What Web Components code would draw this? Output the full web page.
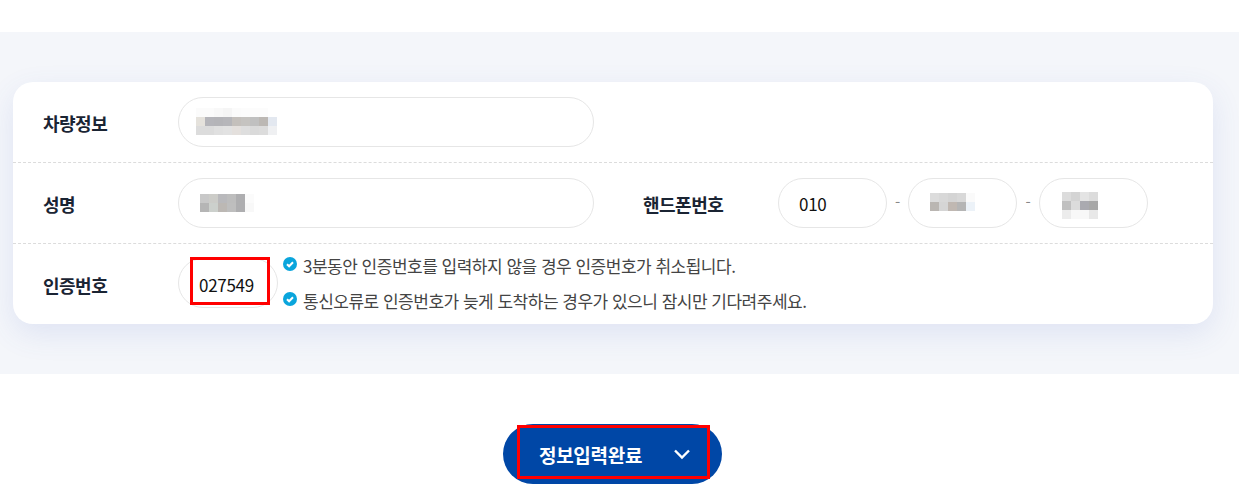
<!DOCTYPE html>
<html lang="ko">
<head>
<meta charset="utf-8">
<title>정보입력</title>
<style>
  body { margin: 0; background: #fff; font-family: "Noto Sans CJK KR", "Noto Sans", sans-serif; color: #111; }
</style>
</head>
<body>
<info-band>
  <info-card>
    <form-row label="차량정보">
      <pill-field w="416"><mosaic-blur cell="9" cols="9" offset="17" dy="-1" colors="fbfbfb fbfbfb f8f8f8 f5f5f5 fbfbfb fcfcfc fcfcfc fcfcfc ffffff e5e2dc b5b5ba b4b4b8 b6b6ba c4c0bc c5c3c0 c0c0c0 bcb8b4 e3e8f0 dcdcdc dcdcdc e0e0e0 e2e2e2 e4e0dd dedede dadada dcdcdc eff0f2"></mosaic-blur></pill-field>
    </form-row>
    <form-row label="성명">
      <pill-field w="416"><mosaic-blur cell="9" cols="6" offset="21" colors="c8c8c8 ccccc8 b9b9bc bdbdbd aeaeb0 fbfbfb b5b5b5 ccd0cc bcb8b4 bebebe aeaeb0 f8f8f8"></mosaic-blur></pill-field>
      <form-label>핸드폰번호</form-label>
      <pill-field w="109">010</pill-field>
      <span-dash w="21"></span-dash>
      <pill-field w="109"><mosaic-blur cell="9" cols="5" offset="21" dy="-1" colors="dcdcdc d8d8d8 d4d4d4 d8d8d8 fafafa bab6b2 d5d5d5 c0b8b2 b5b5b5 ecf2f8"></mosaic-blur></pill-field>
      <span-dash w="22"></span-dash>
      <pill-field w="109"><mosaic-blur cell="9" cols="4" offset="22" dy="2" colors="dcdcdc d4d4d4 e4e4e4 dcdcdc c0c0c0 dcdcdc aaaab0 a8a8a8 ececec f8f8f8 f8f8f8 e8e8e8"></mosaic-blur></pill-field>
    </form-row>
    <form-row label="인증번호">
      <pill-field w="100" marked>027549</pill-field>
      <note-list>
        <check-note>3분동안 인증번호를 입력하지 않을 경우 인증번호가 취소됩니다.</check-note>
        <check-note>통신오류로 인증번호가 늦게 도착하는 경우가 있으니 잠시만 기다려주세요.</check-note>
      </note-list>
    </form-row>
  </info-card>
</info-band>
<submit-button>정보입력완료</submit-button>

<script>
  class InfoBand extends HTMLElement {
    connectedCallback() {
      this.attachShadow({ mode: 'open' });
      this.shadowRoot.innerHTML = `
        <style>
          :host { display: block; margin-top: 32px; height: 342px; box-sizing: border-box; padding: 50px 0 0 13px; background: #f4f6fa; }
        </style>
        <slot></slot>`;
    }
  }

  class InfoCard extends HTMLElement {
    connectedCallback() {
      this.attachShadow({ mode: 'open' });
      this.shadowRoot.innerHTML = `
        <style>
          :host { display: block; width: 1200px; height: 242px; background: #fff; border-radius: 20px; box-shadow: 0 10px 30px rgba(70,100,200,.12); }
        </style>
        <slot></slot>`;
    }
  }

  class FormLabel extends HTMLElement {
    connectedCallback() {
      this.attachShadow({ mode: 'open' });
      this.shadowRoot.innerHTML = `
        <style>
          :host { display: block; width: 135px; flex: none; font-size: 18px; letter-spacing: -0.5px; font-weight: 700; color: #1a2433; position: relative; top: 1px; }
        </style>
        <slot></slot>`;
    }
  }

  class FormRow extends HTMLElement {
    connectedCallback() {
      this.attachShadow({ mode: 'open' });
      this.shadowRoot.innerHTML = `
        <style>
          :host { display: flex; align-items: center; height: 80px; padding-left: 30px; border-bottom: 1px dashed #dcdcdc; }
          :host(:last-child) { border-bottom: 0; }
          ::slotted(form-label) { margin-left: 49px; }
        </style>
        <form-label>${this.getAttribute('label')}</form-label>
        <slot></slot>`;
    }
  }

  class PillField extends HTMLElement {
    connectedCallback() {
      this.attachShadow({ mode: 'open' });
      const mark = this.hasAttribute('marked') ? '<i class="mark"></i>' : '';
      this.shadowRoot.innerHTML = `
        <style>
          :host { display: flex; align-items: center; position: relative; flex: none; box-sizing: border-box; width: ${this.getAttribute('w')}px; height: 50px; padding-left: 20px; border: 1px solid #e6e6e6; border-radius: 25px; font-size: 17px; letter-spacing: -0.3px; color: #111; }
          :host([marked]) { margin-top: -2px; padding-top: 2px; }
          .mark { position: absolute; left: 11px; top: -2px; width: 80px; height: 48px; box-sizing: border-box; border: 3px solid #f00; }
        </style>
        <slot></slot>${mark}`;
    }
  }

  class SpanDash extends HTMLElement {
    connectedCallback() {
      this.attachShadow({ mode: 'open' });
      this.shadowRoot.innerHTML = `
        <style>
          :host { display: block; flex: none; width: ${this.getAttribute('w')}px; text-align: center; font-size: 15px; color: #888; line-height: 1; position: relative; top: -2px; }
        </style>
        -`;
    }
  }

  // pixelated redaction over a typed value
  class MosaicBlur extends HTMLElement {
    connectedCallback() {
      this.attachShadow({ mode: 'open' });
      const cell = this.getAttribute('cell');
      const dy = Number(this.getAttribute('dy') || 0);
      const cells = this.getAttribute('colors').split(' ')
        .map(c => `<b style="background:#${c}"></b>`).join('');
      this.shadowRoot.innerHTML = `
        <style>
          :host { display: grid; grid-template-columns: repeat(${this.getAttribute('cols')}, ${cell}px); grid-auto-rows: ${cell}px; margin-left: ${this.getAttribute('offset') - 20}px; transform: translateY(${dy}px); }
        </style>
        ${cells}`;
    }
  }

  class NoteList extends HTMLElement {
    connectedCallback() {
      this.attachShadow({ mode: 'open' });
      this.shadowRoot.innerHTML = `
        <style>
          :host { display: flex; flex-direction: column; gap: 13px; margin: -3px 0 0 5px; }
        </style>
        <slot></slot>`;
    }
  }

  class CheckNote extends HTMLElement {
    connectedCallback() {
      this.attachShadow({ mode: 'open' });
      this.shadowRoot.innerHTML = `
        <style>
          :host { display: flex; align-items: center; gap: 6px; height: 22px; font-size: 17px; letter-spacing: -0.5px; color: #444; white-space: nowrap; }
          svg { width: 14px; height: 14px; flex: none; margin-top: -2px; }
        </style>
        <svg viewBox="0 0 14 14"><circle cx="7" cy="7" r="7" fill="#0aa5dc"/><path d="M4 7.2l2.1 2.1L10 5.2" fill="none" stroke="#fff" stroke-width="2"/></svg>
        <slot></slot>`;
    }
  }

  class SubmitButton extends HTMLElement {
    connectedCallback() {
      this.attachShadow({ mode: 'open' });
      this.shadowRoot.innerHTML = `
        <style>
          :host { display: flex; align-items: center; position: relative; box-sizing: border-box; width: 219px; height: 60px; margin: 50px 0 0 503px; padding-left: 36px; background: #0047a6; border-radius: 30px; color: #fff; font-size: 19px; letter-spacing: -0.3px; font-weight: 700; }
          svg { width: 18px; height: 12px; margin-left: 31px; }
          .mark { position: absolute; left: 14px; top: 1px; width: 193px; height: 54px; box-sizing: border-box; border: 3px solid #f00; }
        </style>
        <slot></slot>
        <svg viewBox="0 0 18 12"><path d="M2 2.5l7 7 7-7" fill="none" stroke="#fff" stroke-width="2.4"/></svg>
        <i class="mark"></i>`;
    }
  }

  customElements.define('info-band', InfoBand);
  customElements.define('info-card', InfoCard);
  customElements.define('form-label', FormLabel);
  customElements.define('form-row', FormRow);
  customElements.define('pill-field', PillField);
  customElements.define('span-dash', SpanDash);
  customElements.define('mosaic-blur', MosaicBlur);
  customElements.define('note-list', NoteList);
  customElements.define('check-note', CheckNote);
  customElements.define('submit-button', SubmitButton);
</script>
</body>
</html>
